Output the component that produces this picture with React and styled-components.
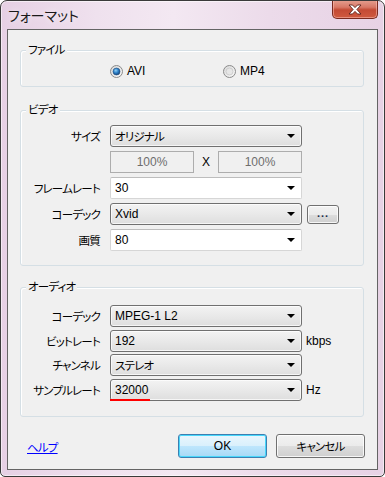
import React from 'react';
import styled, { createGlobalStyle } from 'styled-components';

const GlobalStyle = createGlobalStyle`
    html, body {
        margin: 0;
        padding: 0;
        background: #ffffff;
    }
    body {
        font-family: "Liberation Sans", "Noto Sans CJK JP", sans-serif;
        font-size: 12px;
        font-feature-settings: "palt";
        color: #000;
    }
`

// narrow katakana, closer to MS UI Gothic
const Jp = styled.span`
    font-size: 11.5px;
    letter-spacing: -0.8px;
`

const Window = styled.div`
    width: 385px;
    height: 477px;
    box-sizing: border-box;
    display: flex;
    flex-direction: column;
    border: 1px solid #3a3a3a;
    border-radius: 7px 7px 5px 5px;
    background: linear-gradient(to right, #e6d0e4 0%, #efe1ee 25%, #f3e8f2 45%, #ecdbea 70%, #e7d2e5 100%);
    box-shadow: inset 0 0 0 1px rgba(255,255,255,0.55);
    overflow: hidden;
`

const TitleBar = styled.div`
    height: 28px;
    display: flex;
    justify-content: space-between;
    align-items: flex-start;
    padding-left: 7px;
    flex-shrink: 0;
`

const Title = styled.div`
    font-size: 14px;
    line-height: 16px;
    margin-top: 7px;
    color: #1a1a1a;
    text-shadow: 0 0 6px rgba(255,255,255,0.9);
`

const CloseButton = styled.div`
    width: 46px;
    height: 19px;
    margin-top: -1px;
    margin-right: 6px;
    box-sizing: border-box;
    border: 1px solid #7a2a1f;
    border-top: none;
    border-radius: 0 0 5px 5px;
    background: linear-gradient(to bottom, #e6a091 0%, #d87866 40%, #c44a34 55%, #cf5a40 100%);
    box-shadow: inset 0 0 0 1px rgba(255,200,190,0.5);
    display: flex;
    align-items: center;
    justify-content: center;
`

const Client = styled.div`
    height: 441px;
    margin: 0 6px;
    box-sizing: border-box;
    border: 1px solid #646464;
    background: #f0f0f0;
    display: flex;
    flex-direction: column;
`

const Group = styled.div`
    position: relative;
    margin: ${p => p.$top}px 13px 0 12px;
    height: ${p => p.$height}px;
    box-sizing: border-box;
    border: 1px solid #d5dfe5;
    border-radius: 3px;
    box-shadow: inset 1px 1px 0 #ffffff;
    padding: ${p => p.$pad};
`

const Legend = styled.span`
    position: absolute;
    top: -8px;
    left: 5px;
    padding: 0 2px;
    background: #f0f0f0;
    line-height: 14px;
`

const RadioRow = styled.div`
    display: flex;
    align-items: center;
    padding-left: 89px;
    height: 100%;
`

const RadioItem = styled.label`
    display: flex;
    align-items: center;
    gap: 4px;
    width: ${p => p.$width || 'auto'};
`

const Rows = styled.div`
    display: flex;
    flex-direction: column;
    gap: ${p => p.$gap}px;
`

const Row = styled.div`
    display: grid;
    grid-template-columns: 89px 192px auto;
    align-items: center;
    height: 22px;
`

const Label = styled.div`
    text-align: right;
    padding-right: 10px;
    white-space: nowrap;
`

const Combo = styled.div`
    position: relative;
    height: 22px;
    box-sizing: border-box;
    display: flex;
    align-items: center;
    justify-content: space-between;
    padding: 0 5px 0 4px;
    border-radius: 3px;
    ${p => p.$editable
        ? `border: 1px solid #d6d6d6;
        border-top-color: #bdbdbd;
        background: #ffffff;
        border-radius: 2px;`
        : `border: 1px solid #707070;
        background: linear-gradient(to bottom, #f3f3f3 0%, #e9e9e9 50%, #dedede 100%);
        box-shadow: inset 0 0 0 1px rgba(255,255,255,0.7);`
    }
`

const Arrow = styled.span`
    width: 0;
    height: 0;
    border-left: 4px solid transparent;
    border-right: 4px solid transparent;
    border-top: 4px solid #000;
    margin-right: 1px;
`

const Mark = styled.span`
    position: absolute;
    left: -1px;
    bottom: -1px;
    width: 40px;
    height: 2px;
    background: #ff0000;
`

const SizeBoxes = styled.div`
    display: grid;
    grid-template-columns: 84px 24px 84px;
    align-items: center;
`

const DisabledBox = styled.div`
    height: 22px;
    box-sizing: border-box;
    border: 1px solid #adadad;
    background: #f0f0f0;
    color: #6d6d6d;
    display: flex;
    align-items: center;
    justify-content: center;
`

const Times = styled.span`
    text-align: center;
`

const Unit = styled.span`
    margin-left: 4px;
`

const Button = styled.button`
    font: inherit;
    color: #000;
    width: ${p => p.$width}px;
    height: ${p => p.$height}px;
    margin-left: ${p => p.$ml || 0}px;
    padding: 0;
    box-sizing: border-box;
    border-radius: 3px;
    display: flex;
    align-items: center;
    justify-content: center;
    ${p => p.$default
        ? `border: 1px solid #3c7fb1;
        background: linear-gradient(to bottom, #eaf6fd 0%, #d9f0fc 50%, #bee6fd 51%, #a7d9f5 100%);
        box-shadow: inset 0 0 0 1px #48d7fb;`
        : `border: 1px solid #707070;
        background: linear-gradient(to bottom, #f2f2f2 0%, #ebebeb 50%, #dddddd 51%, #cfcfcf 100%);
        box-shadow: inset 0 0 0 1px rgba(255,255,255,0.8);`
    }
`

const Footer = styled.div`
    margin-top: 17px;
    display: flex;
    align-items: center;
    padding: 0 12px 0 19px;
`

const HelpLink = styled.a`
    color: #0000ff;
    text-decoration: underline;
    margin-right: auto;
    margin-top: 1px;
`

const Dots = styled.span`
    color: #1a2a4a;
    font-weight: bold;
    letter-spacing: 1px;
    font-size: 11px;
    margin-top: -2px;
`

const Radio = ({ checked }) => (
    <svg width="13" height="13" viewBox="0 0 13 13">
        <defs>
            <linearGradient id={checked ? 'rOn' : 'rOff'} x1="0" y1="0" x2="1" y2="1">
                <stop offset="0" stopColor="#d8d8d8" />
                <stop offset="1" stopColor="#fafafa" />
            </linearGradient>
            <radialGradient id="dot" cx="0.4" cy="0.35" r="0.7">
                <stop offset="0" stopColor="#8fd0f5" />
                <stop offset="0.5" stopColor="#2c80c8" />
                <stop offset="1" stopColor="#123f75" />
            </radialGradient>
        </defs>
        <circle cx="6.5" cy="6.5" r="6" fill={`url(#${checked ? 'rOn' : 'rOff'})`} stroke="#8a8a8a" />
        <circle cx="6.5" cy="6.5" r="3.5" fill={checked ? 'url(#dot)' : '#e6e6e6'} stroke={checked ? '#1e4a7a' : '#bdbdbd'} strokeWidth="0.6" />
    </svg>
)

const CloseX = () => (
    <svg width="14" height="11" viewBox="0 0 14 11">
        <path d="M1 1 H4.5 L7 3.6 L9.5 1 H13 L8.9 5.5 L13 10 H9.5 L7 7.4 L4.5 10 H1 L5.1 5.5 Z"
            fill="#ffffff" stroke="#5b2018" strokeWidth="0.9" strokeLinejoin="round" />
    </svg>
)

const Select = ({ children, editable, mark }) => (
    <Combo $editable={editable}>
        <span>{children}</span>
        <Arrow />
        {mark && <Mark />}
    </Combo>
)

export default function App() {
    return (
        <>
            <GlobalStyle />
            <Window>
                <TitleBar>
                    <Title>フォーマット</Title>
                    <CloseButton><CloseX /></CloseButton>
                </TitleBar>
                <Client>
                    <Group $top={20} $height={37} $pad="5px 0 0">
                        <Legend><Jp>ファイル</Jp></Legend>
                        <RadioRow>
                            <RadioItem $width="113px"><Radio checked />AVI</RadioItem>
                            <RadioItem><Radio />MP4</RadioItem>
                        </RadioRow>
                    </Group>

                    <Group $top={23} $height={156} $pad="14px 0 0">
                        <Legend><Jp>ビデオ</Jp></Legend>
                        <Rows $gap={4}>
                            <Row>
                                <Label><Jp>サイズ</Jp></Label>
                                <Select><Jp>オリジナル</Jp></Select>
                            </Row>
                            <Row>
                                <Label />
                                <SizeBoxes>
                                    <DisabledBox>100%</DisabledBox>
                                    <Times>X</Times>
                                    <DisabledBox>100%</DisabledBox>
                                </SizeBoxes>
                            </Row>
                            <Row>
                                <Label><Jp>フレームレート</Jp></Label>
                                <Select editable>30</Select>
                            </Row>
                            <Row>
                                <Label><Jp>コーデック</Jp></Label>
                                <Select>Xvid</Select>
                                <Button $width={32} $height={19} $ml={5}><Dots>...</Dots></Button>
                            </Row>
                            <Row>
                                <Label><Jp>画質</Jp></Label>
                                <Select editable>80</Select>
                            </Row>
                        </Rows>
                    </Group>

                    <Group $top={21} $height={130} $pad="17px 0 0">
                        <Legend><Jp>オーディオ</Jp></Legend>
                        <Rows $gap={2.5}>
                            <Row>
                                <Label><Jp>コーデック</Jp></Label>
                                <Select>MPEG-1 L2</Select>
                            </Row>
                            <Row>
                                <Label><Jp>ビットレート</Jp></Label>
                                <Select>192</Select>
                                <Unit>kbps</Unit>
                            </Row>
                            <Row>
                                <Label><Jp>チャンネル</Jp></Label>
                                <Select><Jp>ステレオ</Jp></Select>
                            </Row>
                            <Row>
                                <Label><Jp>サンプルレート</Jp></Label>
                                <Select mark>32000</Select>
                                <Unit>Hz</Unit>
                            </Row>
                        </Rows>
                    </Group>

                    <Footer>
                        <HelpLink href="#"><Jp>ヘルプ</Jp></HelpLink>
                        <Button $default $width={89} $height={24}>OK</Button>
                        <Button $width={89} $height={24} $ml={9}><Jp>キャンセル</Jp></Button>
                    </Footer>
                </Client>
            </Window>
        </>
    );
}
